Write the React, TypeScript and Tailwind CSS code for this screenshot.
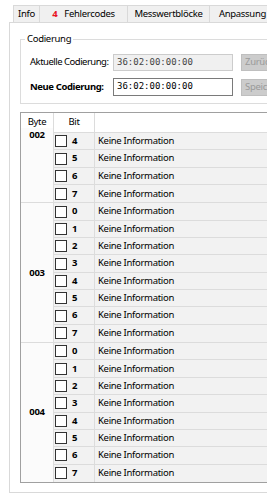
const groups = [
  { byte: '002', bits: [4, 5, 6, 7], top: true },
  { byte: '003', bits: [0, 1, 2, 3, 4, 5, 6, 7], top: false },
  { byte: '004', bits: [0, 1, 2, 3, 4, 5, 6, 7], top: false },
];

const tabs = [
  { label: 'Info', w: 'w-[27px]' },
  { label: 'Fehlercodes', w: 'w-[88px]', count: '4' },
  { label: 'Messwertblöcke', w: 'w-[82px]' },
  { label: 'Anpassung', w: 'w-[66px]' },
];

function Checkbox() {
  return <span className="w-[12px] h-[12px] border border-[#333333] bg-white shrink-0" />;
}

function Code({ muted }: { muted?: boolean }) {
  return (
    <span
      className={`font-['DejaVu_Sans_Mono','Liberation_Mono',monospace] text-[9px] tracking-normal ${muted ? 'text-[#444444]' : 'text-black'}`}
    >
      36:02:00:00:00
    </span>
  );
}

export default function App() {
  return (
    <div className="w-[267px] h-[500px] bg-white overflow-hidden font-['Noto_Sans','Open_Sans',sans-serif] text-[9.5px] tracking-[-0.3px] text-black whitespace-nowrap">
      {/* tab strip */}
      <div className="flex pt-[5px] pl-[13px]">
        {tabs.map((t, i) => (
          <div
            key={t.label}
            className={`${t.w} h-[17px] shrink-0 flex items-center justify-center gap-[7px] bg-[#f0f0f0] border-t border-r border-[#d9d9d9] ${i === 0 ? 'border-l' : ''}`}
          >
            {t.count && <span className="text-[#e81123] font-bold">{t.count}</span>}
            <span>{t.label}</span>
          </div>
        ))}
      </div>

      {/* tab page */}
      <div className="ml-[9px] w-[320px] h-[471px] border-l border-t border-b border-[#d9d9d9] pl-[10px] pt-[16px]">
        {/* Codierung group box */}
        <div className="relative w-[300px] h-[65px] border border-[#dcdcdc] pl-[9px] pt-[14px] flex flex-col gap-[7px]">
          <span className="absolute -top-[8px] left-[4px] bg-white px-[2px]">Codierung</span>
          <div className="flex items-center h-[17px]">
            <span className="w-[83px] shrink-0 tracking-[-0.5px]">Aktuelle Codierung:</span>
            <div className="w-[120px] h-[17px] shrink-0 bg-[#f0f0f0] border border-[#cccccc] flex items-center pl-[3px]">
              <Code muted />
            </div>
            <div className="ml-[8px] w-[50px] h-[17px] shrink-0 bg-[#cccccc] border border-[#bfbfbf] flex items-center pl-[3px] text-[#9a9a9a]">
              Zurück
            </div>
          </div>
          <div className="flex items-center h-[18px]">
            <span className="w-[83px] shrink-0 font-bold tracking-[-0.4px]">Neue Codierung:</span>
            <div className="w-[120px] h-[18px] shrink-0 bg-white border border-[#7a7a7a] flex items-center pl-[3px]">
              <Code />
            </div>
            <div className="ml-[8px] w-[50px] h-[17px] shrink-0 bg-[#cccccc] border border-[#bfbfbf] flex items-center pl-[3px] text-[#9a9a9a]">
              Speichern
            </div>
          </div>
        </div>

        {/* bit table */}
        <div className="mt-[8px] w-[300px] border-l border-t border-b border-[#a0a0a0] flex flex-col">
          <div className="flex h-[20px] bg-white">
            <div className="w-[33px] shrink-0 border-r border-[#dcdcdc] text-center pt-[2px]">Byte</div>
            <div className="w-[41px] shrink-0 border-r border-b border-[#dcdcdc] text-center pt-[2px]">Bit</div>
            <div className="flex-1 border-b border-[#dcdcdc]" />
          </div>
          {groups.map((g, gi) => (
            <div key={g.byte} className={`flex ${gi > 0 ? 'border-t border-[#dcdcdc]' : ''}`}>
              <div
                className={`w-[33px] shrink-0 bg-[#fbfbfb] border-r border-[#dcdcdc] flex justify-center font-bold ${g.top ? 'items-start -mt-[5px]' : 'items-center'}`}
              >
                <span className={g.top ? 'relative z-10' : ''}>{g.byte}</span>
              </div>
              <div className="flex-1 flex flex-col">
                {g.bits.map((b, bi) => (
                  <div
                    key={b}
                    className={`flex h-[17.35px] bg-[#f2f2f2] ${bi < g.bits.length - 1 ? 'border-b border-[#dcdcdc]' : ''}`}
                  >
                    <div className="w-[41px] shrink-0 border-r border-[#dcdcdc] flex items-center gap-[5px] pl-[1px]">
                      <Checkbox />
                      <span className="font-bold">{b}</span>
                    </div>
                    <div className="flex-1 flex items-center pl-[3px]">Keine Information</div>
                  </div>
                ))}
              </div>
            </div>
          ))}
        </div>
      </div>
    </div>
  );
}
